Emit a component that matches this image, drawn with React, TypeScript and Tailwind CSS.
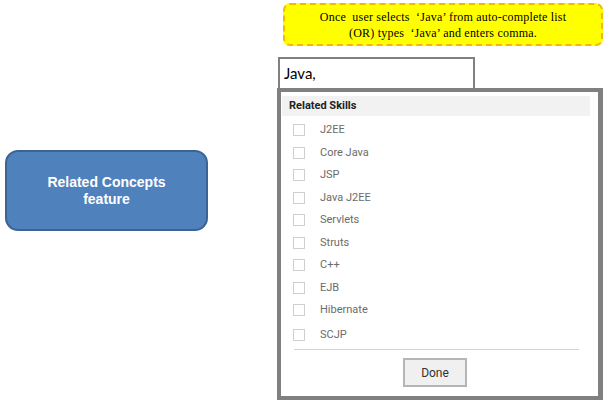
import React from 'react';

const skills = [
  'J2EE',
  'Core Java',
  'JSP',
  'Java J2EE',
  'Servlets',
  'Struts',
  'C++',
  'EJB',
  'Hibernate',
];

const SkillRow: React.FC<{ label: string; className?: string }> = ({ label, className }) => (
  <div className={`flex items-center h-[22.5px] ${className ?? ''}`}>
    <span className="ml-[12px] w-[12px] h-[12px] border border-[#cfcfcf] bg-white" />
    <span className="ml-[15px] text-[11px] text-[#6b6b6b] font-['Roboto',sans-serif]">{label}</span>
  </div>
);

const App: React.FC = () => {
  return (
    <div className="w-[616px] h-[400px] bg-white flex overflow-hidden">
      <div className="w-[277px] shrink-0 pt-[150px] pl-[5px]">
        <div className="w-[203px] h-[81px] rounded-[13px] bg-[#4f81bd] border-2 border-[#3b6494] flex items-center justify-center text-center text-white font-bold text-[14px] leading-[17px] font-['Liberation_Sans',Arial,sans-serif]">
          Related Concepts
          <br />
          feature
        </div>
      </div>

      <div className="flex flex-col">
        <div className="ml-[6px] mt-[3px] w-[320px] h-[43px] rounded-[7px] bg-[#ffff00] border-2 border-dashed border-[#f5b800] flex items-center justify-center text-center text-[12px] leading-[16px] tracking-[0.2px] text-black font-['Liberation_Serif',serif]">
          Once&nbsp; user selects&nbsp; ‘Java’ from auto-complete list
          <br />
          (OR) types&nbsp; ‘Java’ and enters comma.
        </div>

        <div className="ml-[1px] mt-[11px] w-[197px] h-[31px] border-2 border-b-0 border-[#808080] pl-[4px] pt-[4px] text-[15px] leading-[20px] text-black font-['Lato',sans-serif]">
          Java,
        </div>

        <div className="w-[326px] h-[312px] border-4 border-r-[5px] border-[#808080] bg-white flex flex-col">
          <div className="mt-[4px] ml-[1px] w-[308px] h-[20px] bg-[#f2f2f2] flex items-center pl-[7px] text-[11px] font-bold text-[#222] font-['Roboto',sans-serif]">
            Related Skills
          </div>
          <div className="mt-[3px] flex flex-col">
            {skills.map((s) => (
              <SkillRow key={s} label={s} />
            ))}
            <SkillRow label="SCJP" className="mt-[2.5px]" />
          </div>
          <div className="ml-[13px] mt-[2.5px] w-[285px] h-px bg-[#d4d4d4]" />
          <button className="ml-[122px] mt-[8px] w-[64px] h-[29px] bg-[#f0f0f0] border-2 border-[#b5b5b5] text-[12px] text-[#333] font-['Roboto',sans-serif]">
            Done
          </button>
        </div>
      </div>
    </div>
  );
};

export default App;
